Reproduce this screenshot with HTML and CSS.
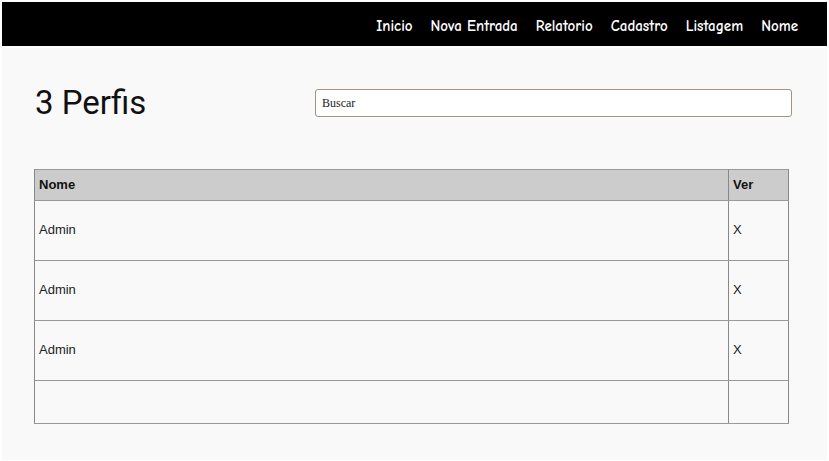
FILE: index.html
```html
<!DOCTYPE html>
<html lang="pt">
<head>
<meta charset="utf-8">
<title>Perfis</title>
<link rel="stylesheet" href="styles.css">
</head>
<body>
<div class="page">
  <nav class="topbar">
    <a class="nav-link" href="#">Inicio</a>
    <a class="nav-link" href="#">Nova Entrada</a>
    <a class="nav-link" href="#">Relatorio</a>
    <a class="nav-link" href="#">Cadastro</a>
    <a class="nav-link" href="#">Listagem</a>
    <a class="nav-link nav-last" href="#">Nome</a>
  </nav>
  <main class="content">
    <div class="head-row">
      <h1 class="title">3 Perfis</h1>
      <input class="search" type="text" value="Buscar">
    </div>
    <table class="grid">
      <thead>
        <tr><th class="col-name">Nome</th><th class="col-ver">Ver</th></tr>
      </thead>
      <tbody>
        <tr class="row"><td>Admin</td><td>X</td></tr>
        <tr class="row"><td>Admin</td><td>X</td></tr>
        <tr class="row"><td>Admin</td><td>X</td></tr>
        <tr class="row-empty"><td></td><td></td></tr>
      </tbody>
    </table>
  </main>
</div>
</body>
</html>
```
FILE: styles.css
```css
html, body {
  margin: 0;
  padding: 0;
  background: #ffffff;
}
.page {
  padding: 2px;
}
.topbar {
  height: 44px;
  box-sizing: border-box;
  padding-top: 3px;
  background: #000;
  display: flex;
  justify-content: flex-end;
  align-items: center;
  gap: 18px;
  padding-right: 29px;
}
.nav-link {
  color: #fff;
  text-decoration: none;
  font-family: "Comic Sans MS", "Comic Neue", cursive, sans-serif;
  font-size: 15px;
  font-weight: bold;
}
.content {
  margin-top: 2px;
  background: #f9f9f9;
  height: 412px;
  padding: 35px 0 0 32px;
  box-sizing: border-box;
}
.head-row {
  display: flex;
  align-items: center;
  padding-right: 35px;
}
.title {
  margin: 0;
  font-family: Roboto, sans-serif;
  font-weight: 400;
  font-size: 33px;
  line-height: 40px;
  color: #111;
  padding-left: 1px;
}
.search {
  margin-left: auto;
  width: 477px;
  height: 28px;
  box-sizing: border-box;
  border: 1px solid #a09484;
  border-radius: 3px;
  background: #fff;
  padding: 0 6px;
  font-family: "Liberation Serif", serif;
  font-size: 12px;
  color: #222;
  outline: none;
}
.grid {
  margin-top: 46px;
  width: 755px;
  border-collapse: collapse;
  font-family: "Liberation Sans", Arial, sans-serif;
  font-size: 13px;
  color: #222;
  border: 1px solid #999;
}
.grid th, .grid td {
  text-align: left;
  padding: 0 4px;
  border-bottom: 1px solid #999;
  border-left: 1px solid #888;
  border-right: 1px solid #888;
}
.grid th {
  background: #cccccc;
  height: 29px;
  padding-bottom: 1px;
  font-weight: bold;
  color: #111;
}
.col-ver {
  width: 51px;
}
.row td {
  height: 57px;
  padding-bottom: 2px;
}
.row-empty td {
  height: 42px;
}
```
